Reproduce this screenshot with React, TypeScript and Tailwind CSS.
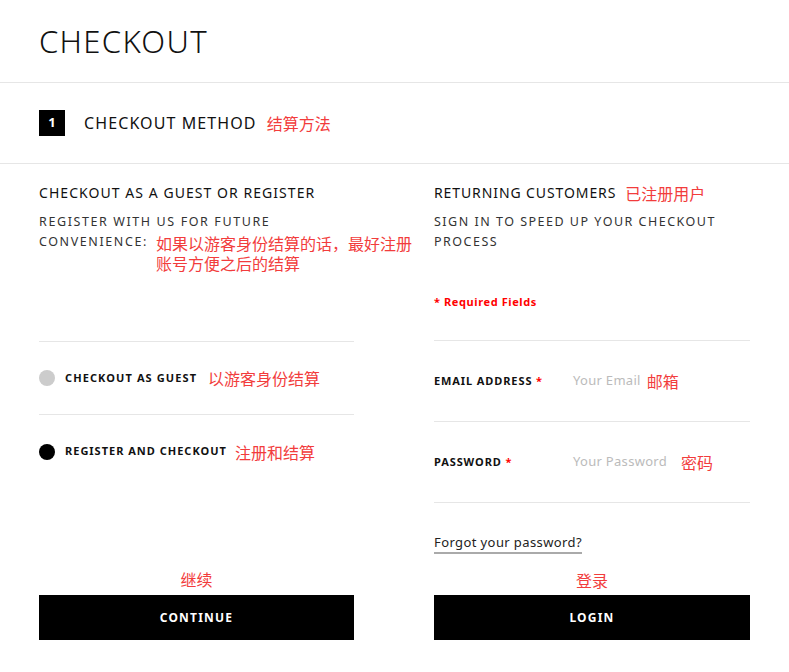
import React from "react";

const CN = "font-['Noto_Sans_CJK_SC',sans-serif] text-[#f23c3c] text-[16px] font-normal tracking-normal";

export default function App() {
  return (
    <div className="w-[789px] h-[672px] bg-white text-[#111] font-['Noto_Sans','Noto_Sans_CJK_SC',sans-serif] overflow-hidden">
      <div className="h-[83px] flex items-center px-[39px] border-b border-[#e6e6e6]">
        <h1 className="text-[31px] font-light tracking-[1.3px] text-[#111] leading-none">CHECKOUT</h1>
      </div>
      <div className="h-[81px] flex items-center px-[39px] border-b border-[#e6e6e6]">
        <div className="w-[26px] h-[26px] bg-black text-white text-[13px] font-bold flex items-center justify-center">1</div>
        <span className="ml-[19px] text-[16px] tracking-[1.1px]">CHECKOUT METHOD</span>
        <span className={CN + " ml-[10px]"}>结算方法</span>
      </div>
      <div className="flex px-[39px] gap-[80px]">
        {/* Left column */}
        <div className="w-[315px] flex flex-col">
          <div className="h-[178px] border-b border-[#e6e6e6]">
            <div className="mt-[19px] text-[14px] leading-[20px] tracking-[1.05px] whitespace-nowrap">CHECKOUT AS A GUEST OR REGISTER</div>
            <div className="mt-[9px] text-[12.5px] leading-[20px] tracking-[1.6px] text-[#333] whitespace-nowrap">
              <div>REGISTER WITH US FOR FUTURE</div>
              <div className="flex items-start">
                <span className="shrink-0">CONVENIENCE:</span>
                <span className={CN + " shrink-0 ml-[8px] leading-[20px] w-[260px] whitespace-normal mt-[1px]"}>如果以游客身份结算的话，最好注册<br />账号方便之后的结算</span>
              </div>
            </div>
          </div>
          <div className="h-[73px] flex items-center border-b border-[#e6e6e6]">
            <span className="w-4 h-4 rounded-full bg-[#cccccc]" />
            <span className="ml-[10px] text-[11px] font-bold tracking-[1.1px]">CHECKOUT AS GUEST</span>
            <span className={CN + " ml-[11px]"}>以游客身份结算</span>
          </div>
          <div className="h-[73px] flex items-center">
            <span className="w-4 h-4 rounded-full bg-black" />
            <span className="ml-[10px] text-[11px] font-bold tracking-[1px]">REGISTER AND CHECKOUT</span>
            <span className={CN + " ml-[8px]"}>注册和结算</span>
          </div>
          <div className={CN + " mt-[81px] leading-[20px] text-center"}>继续</div>
          <button className="mt-[6px] h-[45px] w-full bg-black text-white text-[12px] font-bold tracking-[1.2px]">CONTINUE</button>
        </div>
        {/* Right column */}
        <div className="w-[316px] flex flex-col">
          <div className="h-[177px] border-b border-[#e6e6e6]">
            <div className="mt-[19px] text-[14px] leading-[20px] tracking-[0.9px] flex items-center whitespace-nowrap">
              RETURNING CUSTOMERS<span className={CN + " ml-[9px]"}>已注册用户</span>
            </div>
            <div className="mt-[9px] text-[12.5px] leading-[20px] tracking-[1.5px] text-[#333] whitespace-nowrap">
              SIGN IN TO SPEED UP YOUR CHECKOUT<br />PROCESS
            </div>
            <div className="mt-[40px] text-[11px] font-bold text-[#ff0000] leading-[20px] tracking-[0.6px]">* Required Fields</div>
          </div>
          <div className="h-[81px] flex items-center border-b border-[#e6e6e6]">
            <span className="w-[139px] text-[11px] font-bold tracking-[0.9px] whitespace-nowrap">EMAIL ADDRESS <span className="text-[#ff0000]">*</span></span>
            <span className="text-[13px] text-[#bbbbbb] tracking-[0.3px]">Your Email</span>
            <span className={CN + " ml-[6px]"}>邮箱</span>
          </div>
          <div className="h-[81px] flex items-center border-b border-[#e6e6e6]">
            <span className="w-[139px] text-[11px] font-bold tracking-[0.9px] whitespace-nowrap">PASSWORD <span className="text-[#ff0000]">*</span></span>
            <span className="text-[13px] text-[#bbbbbb] tracking-[0.3px]">Your Password</span>
            <span className={CN + " ml-[14px]"}>密码</span>
          </div>
          <div className="mt-[29px] flex">
            <span className="text-[13px] leading-[20px] tracking-[0.4px] text-[#222] border-b-2 border-[#aaaaaa]">Forgot your password?</span>
          </div>
          <div className={CN + " mt-[16px] leading-[20px] text-center"}>登录</div>
          <button className="mt-[5px] h-[45px] w-full bg-black text-white text-[12px] font-bold tracking-[1.2px]">LOGIN</button>
        </div>
      </div>
    </div>
  );
}
